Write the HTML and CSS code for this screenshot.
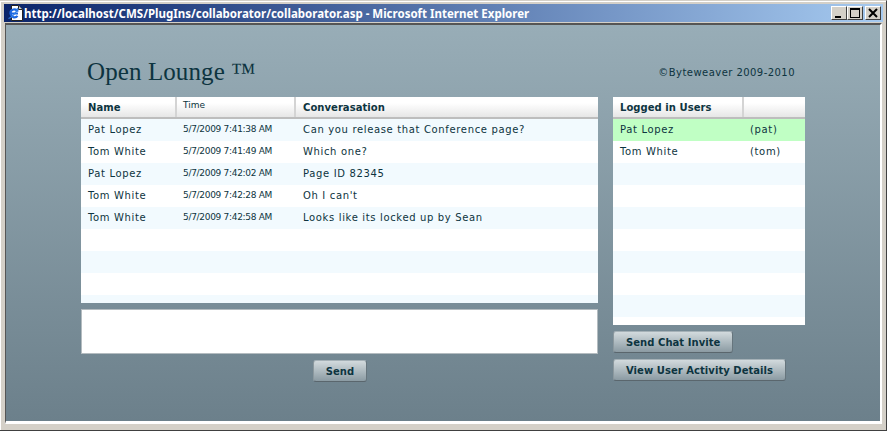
FILE: index.html
```html
<!DOCTYPE html>
<html lang="en">
<head>
    <meta charset="UTF-8">
    <title>Open Lounge</title>
    <link rel="stylesheet" href="styles.css">
</head>
<body>
    <div class="window">
        <div class="titlebar">
            <svg class="ie-icon" viewBox="0 0 16 16">
                <path d="M3.500 .5h7l4 4v11h-11z" fill="#fff" stroke="#222"/>
                <path d="M10.500 .5v4h4" fill="#ccc" stroke="#222"/>
                <circle cx="6" cy="8" r="3.800" fill="#fff"/>
                <path d="M10 8.500h-7.500a3.800 3.800 0 0 1 7.300-1.800M2.800 9.500a3.800 3.800 0 0 0 6.700 1.400" fill="none" stroke="#1a66e0" stroke-width="2.200"/>
                <path d="M.5 13.500c3-1 8-6 9.500-10.500" fill="none" stroke="#2f7fe8" stroke-width="1.200"/>
            </svg>
            <span class="title-text">http://localhost/CMS/PlugIns/collaborator/collaborator.asp - Microsoft Internet Explorer</span>
            <div class="win-buttons">
                <div class="win-btn">
                    <svg viewBox="0 0 14 12"><path d="M3 9h6v2H3z" fill="#000"/></svg>
                </div>
                <div class="win-btn">
                    <svg viewBox="0 0 14 12"><path d="M2 1h10v10H2z M3 3v7h8V3z" fill="#000" fill-rule="evenodd"/></svg>
                </div>
                <div class="win-btn close">
                    <svg viewBox="0 0 14 12"><path d="M3 2l8 8M11 2l-8 8" stroke="#000" stroke-width="2" fill="none"/></svg>
                </div>
            </div>
        </div>

        <div class="client">
            <div class="heading">
                <h1>Open Lounge ™</h1>
                <span class="copyright">©Byteweaver 2009-2010</span>
            </div>

            <div class="columns">
                <div class="left">
                    <div class="panel chat-panel">
                        <div class="row head">
                            <div class="c-name">Name</div>
                            <div class="c-time time-head">Time</div>
                            <div class="c-conv">Converasation</div>
                        </div>
                        <div class="row tint">
                            <div class="c-name">Pat Lopez</div>
                            <div class="c-time">5/7/2009 7:41:38 AM</div>
                            <div class="c-conv">Can you release that Conference page?</div>
                        </div>
                        <div class="row">
                            <div class="c-name">Tom White</div>
                            <div class="c-time">5/7/2009 7:41:49 AM</div>
                            <div class="c-conv">Which one?</div>
                        </div>
                        <div class="row tint">
                            <div class="c-name">Pat Lopez</div>
                            <div class="c-time">5/7/2009 7:42:02 AM</div>
                            <div class="c-conv">Page ID 82345</div>
                        </div>
                        <div class="row">
                            <div class="c-name">Tom White</div>
                            <div class="c-time">5/7/2009 7:42:28 AM</div>
                            <div class="c-conv">Oh I can't</div>
                        </div>
                        <div class="row tint">
                            <div class="c-name">Tom White</div>
                            <div class="c-time">5/7/2009 7:42:58 AM</div>
                            <div class="c-conv">Looks like its locked up by Sean</div>
                        </div>
                        <div class="row"></div>
                        <div class="row tint"></div>
                        <div class="row"></div>
                        <div class="row tint stub"></div>
                    </div>
                    <textarea class="message"></textarea>
                    <div class="send-row">
                        <button class="btn">Send</button>
                    </div>
                </div>

                <div class="right">
                    <div class="panel users-panel">
                        <div class="row head">
                            <div class="c-user">Logged in Users</div>
                            <div class="c-login"></div>
                        </div>
                        <div class="row online">
                            <div class="c-user">Pat Lopez</div>
                            <div class="c-login">(pat)</div>
                        </div>
                        <div class="row">
                            <div class="c-user">Tom White</div>
                            <div class="c-login">(tom)</div>
                        </div>
                        <div class="row tint"></div>
                        <div class="row"></div>
                        <div class="row tint"></div>
                        <div class="row"></div>
                        <div class="row tint"></div>
                        <div class="row"></div>
                        <div class="row tint"></div>
                        <div class="row stub"></div>
                    </div>
                    <div class="actions">
                        <button class="btn">Send Chat Invite</button>
                        <button class="btn">View User Activity Details</button>
                    </div>
                </div>
            </div>
        </div>
    </div>
</body>
</html>
```

FILE: styles.css
```css
html, body {
    margin: 0;
    height: 100%;
}

body {
    overflow: hidden;
    font-family: "DejaVu Sans", sans-serif;
    font-size: 10px;
    color: #0d3440;
}

/* Window frame */
.window {
    box-sizing: border-box;
    width: 887px;
    height: 431px;
    display: flex;
    flex-direction: column;
    padding: 3px 3px 3px 4px;
    background-color: #d4d0c8;
    border-top: 1px solid #d4d0c8;
    border-right: 1px solid #404040;
    border-bottom: 1px solid #404040;
    box-shadow: inset 1px 1px #fff;
}

.titlebar {
    height: 18px;
    flex: none;
    display: flex;
    align-items: center;
    background: linear-gradient(to right, #0a246a, #a6caf0);
    color: #fff;
}

.ie-icon {
    width: 16px;
    height: 16px;
    margin-left: 4px;
    flex: none;
}

.title-text {
    font-family: "Noto Sans", sans-serif;
    font-size: 11.500px;
    font-weight: 700;
    white-space: nowrap;
}

.win-buttons {
    margin-left: auto;
    margin-right: 2px;
    display: flex;
}

.win-btn {
    box-sizing: border-box;
    width: 16px;
    height: 14px;
    background-color: #d4d0c8;
    border: 1px solid;
    border-color: #fff #404040 #404040 #fff;
}

.win-btn.close {
    margin-left: 2px;
}

.win-btn svg {
    display: block;
    width: 14px;
    height: 12px;
}

/* Page area */
.client {
    flex: 1;
    margin: 1px 1px 3px 1px;
    box-sizing: border-box;
    padding: 0 0 0 75px;
    background: linear-gradient(to bottom, #98adb7, #6c808b);
    border-right: 2px solid #fff;
    border-bottom: 3px solid #fff;
    border-top: 2px solid #555;
    border-left: 1px solid #555;
}

.heading {
    width: 714px;
    height: 72px;
    display: flex;
    align-items: flex-start;
    justify-content: space-between;
}

h1 {
    margin: 32px 0 0 6px;
    font-family: "Liberation Serif", serif;
    font-size: 25px;
    font-weight: 400;
    line-height: 30px;
    letter-spacing: 0.1px;
}

.copyright {
    margin-top: 42px;
    letter-spacing: 0.45px;
}

.columns {
    display: flex;
    gap: 15px;
}

.left {
    width: 517px;
}

.right {
    width: 192px;
}

/* Grids */
.panel {
    background-color: #fff;
}

.chat-panel {
    height: 206px;
    overflow: hidden;
}

.users-panel {
    height: 228px;
    overflow: hidden;
}

.row {
    box-sizing: border-box;
    display: flex;
    height: 22px;
    padding-bottom: 2px;
    align-items: center;
    letter-spacing: 0.65px;
}

.row.tint {
    background-color: #f2fafe;
}

.row.online {
    background-color: #c0ffc4;
}

.row.stub {
    height: 8px;
    padding-bottom: 0;
}

.row.head {
    padding-bottom: 0;
    align-items: stretch;
    background: linear-gradient(to bottom, #fff 30%, #e6e6e6);
    border-bottom: 2px solid #bdbdbd;
    font-weight: 700;
    letter-spacing: 0.05px;
}

.row.head > div {
    display: flex;
    align-items: center;
    border-right: 2px solid #d4d4d4;
    box-sizing: border-box;
}

.row.head > div:last-child {
    border-right: 0;
}

.c-name {
    width: 96px;
    padding-left: 7px;
    box-sizing: border-box;
}

.c-time {
    width: 119px;
    padding-left: 6px;
    box-sizing: border-box;
    font-size: 9px;
    letter-spacing: -0.3px;
}

.row.head .time-head {
    font-weight: 400;
    align-items: flex-start;
    padding-top: 3px;
    letter-spacing: 0;
}

.c-conv {
    flex: 1;
    padding-left: 7px;
}

.c-user {
    width: 131px;
    padding-left: 7px;
    box-sizing: border-box;
}

.c-login {
    flex: 1;
    padding-left: 6px;
}

/* Inputs */
.message {
    display: block;
    box-sizing: border-box;
    width: 517px;
    height: 45px;
    margin: 6px 0 0;
    padding: 2px;
    background-color: #fff;
    border: 1px solid #b4bcc0;
    border-radius: 0;
    resize: none;
    outline: none;
}

.send-row {
    margin-top: 6px;
    padding-left: 1px;
    display: flex;
    justify-content: center;
}

.btn {
    box-sizing: border-box;
    height: 22px;
    padding: 0 12px;
    background: linear-gradient(to bottom, #d2dadd, #8b9ba3);
    border: 1px solid;
    border-color: #a5b1b7 #66757d #5a666d #8b989e;
    border-radius: 3px;
    font-family: "DejaVu Sans", sans-serif;
    font-size: 10px;
    font-weight: 700;
    letter-spacing: 0.05px;
    color: #0d3440;
    white-space: nowrap;
}

.actions {
    margin-top: 6px;
    display: flex;
    flex-direction: column;
    align-items: flex-start;
    gap: 6px;
}
```
